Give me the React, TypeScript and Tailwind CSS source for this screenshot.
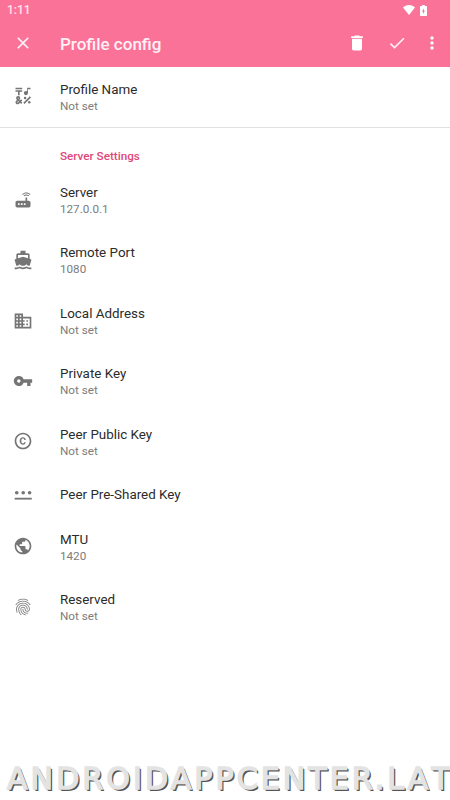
import type { ComponentType } from 'react';
import {
  MdCheck,
  MdClose,
  MdCopyright,
  MdDelete,
  MdDirectionsBoat,
  MdDomain,
  MdEmojiSymbols,
  MdFingerprint,
  MdMoreVert,
  MdPublic,
  MdRouter,
  MdVpnKey,
} from 'react-icons/md';

interface Preference {
  icon: ComponentType<{ className?: string }>;
  title: string;
  summary?: string;
}

function PasswordDots({ className }: { className?: string }) {
  return (
    <svg className={className} viewBox="0 0 24 24" fill="currentColor">
      <path d="M2 16.500h20.500v2.200H2z" />
      <circle cx="4.500" cy="10.500" r="2.200" />
      <circle cx="12.200" cy="10.500" r="2.200" />
      <circle cx="19.900" cy="10.500" r="2.200" />
    </svg>
  );
}

const serverSettings: Preference[] = [
  { icon: MdRouter, title: 'Server', summary: '127.0.0.1' },
  { icon: MdDirectionsBoat, title: 'Remote Port', summary: '1080' },
  { icon: MdDomain, title: 'Local Address', summary: 'Not set' },
  { icon: MdVpnKey, title: 'Private Key', summary: 'Not set' },
  { icon: MdCopyright, title: 'Peer Public Key', summary: 'Not set' },
  { icon: PasswordDots, title: 'Peer Pre-Shared Key' },
  { icon: MdPublic, title: 'MTU', summary: '1420' },
  { icon: MdFingerprint, title: 'Reserved', summary: 'Not set' },
];

function PreferenceRow({ icon: Icon, title, summary }: Preference) {
  return (
    <div className={`flex items-center pl-[13.3px] ${summary ? 'h-[60.4px]' : 'h-[44.5px]'}`}>
      <Icon className="mb-[1.5px] h-5 w-5 shrink-0 text-[#757575]" />
      <div className={`ml-[26.7px] ${summary ? 'pt-px' : ''}`}>
        <div className="text-[13.4px] leading-[17px] text-[#2b2b2b]">{title}</div>
        {summary && <div className="text-[11.7px] leading-[17px] text-[#7c7c7c]">{summary}</div>}
      </div>
    </div>
  );
}

export default function App() {
  return (
    <div className="flex h-[800px] w-[450px] flex-col overflow-hidden bg-white font-['Roboto',sans-serif]">
      <header className="h-[67px] shrink-0 bg-[#fb7299] text-white">
        {/* Status bar */}
        <div className="flex h-5 items-center justify-between pr-[23px] pl-[7px]">
          <span className="text-[12px] font-medium text-white/80">1:11</span>
          <div className="flex items-center gap-[5px]">
            <svg className="h-[10px] w-3" viewBox="0 0 12 10" fill="currentColor">
              <path d="M6 10 0 2.6C1.6 1 3.6 0 6 0s4.4 1 6 2.6z" />
            </svg>
            <svg className="h-[11px] w-[7px]" viewBox="0 0 7 11" fill="currentColor" fillRule="evenodd">
              <path d="M2.2 0h2.6v1H6.3q.7 0 .7.7v8.6q0 .7-.7.7H.7q-.7 0-.7-.7V1.7Q0 1 .7 1h1.5zM3 3.5v2H2L4 9V6.5h1z" />
            </svg>
          </div>
        </div>

        {/* Toolbar */}
        <div className="flex h-[47px] items-center pl-[13.3px]">
          <MdClose className="mb-px h-5 w-5 text-white/90" />
          <h1 className="ml-[26.7px] flex-1 pt-[2px] text-[17px] font-medium text-white/90">Profile config</h1>
          <MdDelete className="mb-px h-5 w-5" />
          <MdCheck className="mb-px ml-5 h-5 w-5 text-white/90" />
          <MdMoreVert className="mr-2 mb-px ml-[15px] h-5 w-5" />
        </div>
      </header>

      <div className="shrink-0 border-b border-[#e2e2e2]">
        <PreferenceRow icon={MdEmojiSymbols} title="Profile Name" summary="Not set" />
      </div>

      <main className="flex-1">
        <h2 className="flex h-[42px] items-end pb-[5px] pl-[60px] text-[11.7px] font-medium text-[#e0487a]">
          Server Settings
        </h2>
        {serverSettings.map((pref) => (
          <PreferenceRow key={pref.title} {...pref} />
        ))}
      </main>

      <footer className="h-10 shrink-0 pl-[7px] font-['DejaVu_Sans',sans-serif] text-[30px] leading-[38px] tracking-[3.1px] whitespace-nowrap text-[#e3e3e3] [-webkit-text-stroke:1.5px_#e3e3e3] [text-shadow:1px_1px_0_#555,2px_2px_0_#555]">
        ANDROIDAPPCENTER.LA<span className="tracking-normal">T</span>
      </footer>
    </div>
  );
}
